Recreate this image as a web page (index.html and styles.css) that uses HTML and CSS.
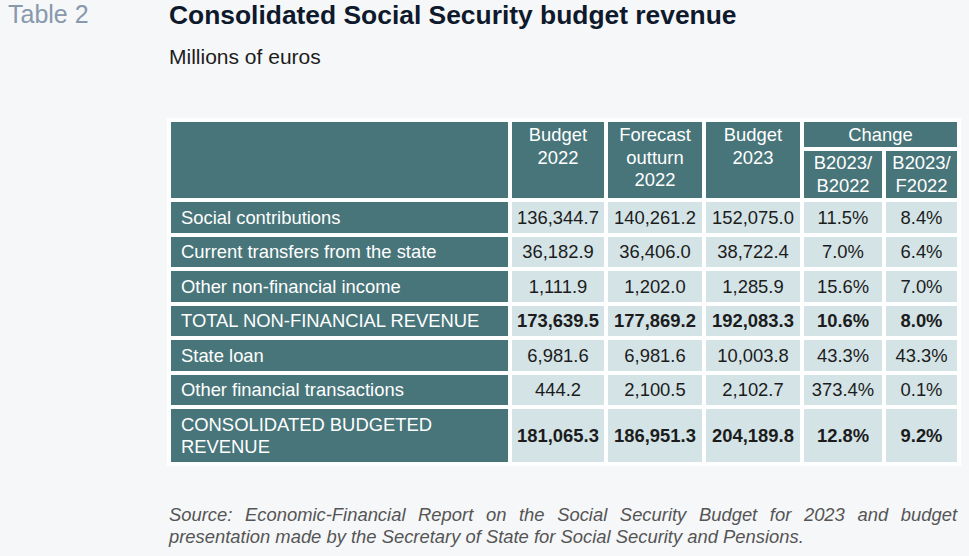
FILE: index.html
```html
<!DOCTYPE html>
<html lang="en">
<head>
<meta charset="utf-8">
<title>Table 2</title>
<link rel="stylesheet" href="styles.css">
</head>
<body>
<div class="page">
  <div class="side">Table 2</div>
  <div class="main">
    <h1 class="title">Consolidated Social Security budget revenue</h1>
    <p class="unit">Millions of euros</p>
    <table class="data">
      <colgroup>
        <col class="c-label"><col class="c-num1"><col class="c-num2"><col class="c-num3"><col class="c-pct1"><col class="c-pct2">
      </colgroup>
      <thead>
        <tr class="h1">
          <th rowspan="2" class="blank"></th>
          <th rowspan="2">Budget<br>2022</th>
          <th rowspan="2">Forecast<br>outturn<br>2022</th>
          <th rowspan="2">Budget<br>2023</th>
          <th colspan="2" class="change">Change</th>
        </tr>
        <tr class="h2">
          <th class="sub">B2023/<br>B2022</th>
          <th class="sub">B2023/<br>F2022</th>
        </tr>
      </thead>
      <tbody>
        <tr><td class="label">Social contributions</td><td>136,344.7</td><td>140,261.2</td><td>152,075.0</td><td>11.5%</td><td>8.4%</td></tr>
        <tr><td class="label">Current transfers from the state</td><td>36,182.9</td><td>36,406.0</td><td>38,722.4</td><td>7.0%</td><td>6.4%</td></tr>
        <tr><td class="label">Other non-financial income</td><td>1,111.9</td><td>1,202.0</td><td>1,285.9</td><td>15.6%</td><td>7.0%</td></tr>
        <tr class="total"><td class="label">TOTAL NON-FINANCIAL REVENUE</td><td>173,639.5</td><td>177,869.2</td><td>192,083.3</td><td>10.6%</td><td>8.0%</td></tr>
        <tr><td class="label">State loan</td><td>6,981.6</td><td>6,981.6</td><td>10,003.8</td><td>43.3%</td><td>43.3%</td></tr>
        <tr><td class="label">Other financial transactions</td><td>444.2</td><td>2,100.5</td><td>2,102.7</td><td>373.4%</td><td>0.1%</td></tr>
        <tr class="total grand"><td class="label">CONSOLIDATED BUDGETED<br>REVENUE</td><td>181,065.3</td><td>186,951.3</td><td>204,189.8</td><td>12.8%</td><td>9.2%</td></tr>
      </tbody>
    </table>
    <p class="source">Source: Economic-Financial Report on the Social Security Budget for 2023 and budget presentation made by the Secretary of State for Social Security and Pensions.</p>
  </div>
</div>
</body>
</html>
```

FILE: styles.css
```css
html, body {
  margin: 0;
  padding: 0;
  background: #f6f7f9;
}

body {
  font-family: "Liberation Sans", Arial, Helvetica, sans-serif;
  color: #1c1c1c;
}

.page {
  display: flex;
  padding-left: 8px;
  width: 969px;
  box-sizing: border-box;
}

.side {
  width: 161px;
  flex: none;
  font-size: 25px;
  line-height: 28px;
  color: #8898ad;
}

.main {
  flex: none;
  width: 788px;
}

.title {
  margin: 0;
  font-size: 26.4px;
  line-height: 30px;
  font-weight: bold;
  color: #0e1a2c;
}

.unit {
  margin: 15px 0 0;
  font-size: 21px;
  line-height: 24px;
  color: #1c1c1c;
}

.data {
  margin: 49px 0 0 -2px;
  border-collapse: separate;
  border-spacing: 4px;
  background: #ffffff;
  table-layout: fixed;
  width: 794px;
  font-size: 18.4px;
}

.c-label { width: 337px; }
.c-num1 { width: 92px; }
.c-num2 { width: 94px; }
.c-num3 { width: 94px; }
.c-pct1 { width: 78px; }
.c-pct2 { width: 71px; }

.data th {
  background: #48757a;
  color: #ffffff;
  font-weight: normal;
  line-height: 22.5px;
  vertical-align: top;
  text-align: center;
  padding: 2px 0 0;
}

.data .h1 th.change {
  height: 25px;
  box-sizing: border-box;
  padding-top: 2px;
}

.data th.sub {
  height: 47px;
  box-sizing: border-box;
  padding: 1px 0 0;
  line-height: 22.5px;
}

.data td {
  background: #d3e3e6;
  text-align: center;
  height: 30.5px;
  box-sizing: border-box;
  padding: 1px 0 0;
  line-height: 22px;
  vertical-align: middle;
  white-space: nowrap;
}

.data td.label {
  background: #48757a;
  color: #ffffff;
  text-align: left;
  padding: 1px 10px 0;
}

.data tr.total td {
  font-weight: bold;
}

.data tr.total td.label {
  font-weight: normal;
}

.data tr.grand td {
  height: 53px;
}

.source {
  margin: 38px 0 0;
  font-size: 18.4px;
  line-height: 22px;
  font-style: italic;
  color: #555555;
  text-align: justify;
}
```
